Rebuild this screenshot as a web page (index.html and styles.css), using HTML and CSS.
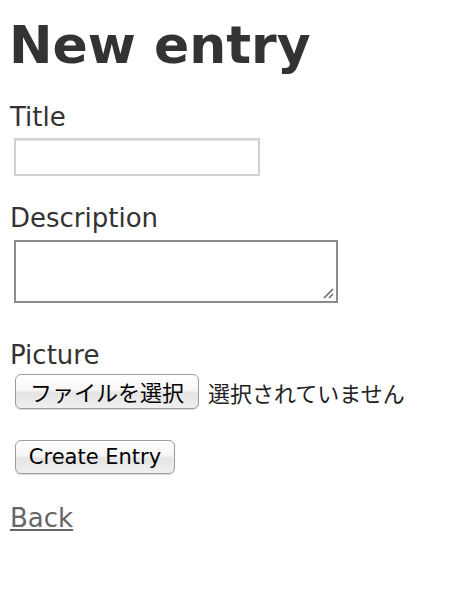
FILE: index.html
```html
<!DOCTYPE html>
<html lang="ja">
<head>
<meta charset="utf-8">
<title>New entry</title>
<link rel="stylesheet" href="styles.css">
</head>
<body>
<h1 class="page-title">New entry</h1>
<form class="entry-form">
  <div class="field field-title">
    <label class="field-label" for="entry_title">Title</label>
    <input class="text-input" id="entry_title" type="text">
  </div>
  <div class="field field-desc">
    <label class="field-label" for="entry_description">Description</label>
    <div class="area-wrap">
      <textarea class="text-area" id="entry_description"></textarea>
      <svg class="resizer" width="12" height="12" viewBox="0 0 12 12" aria-hidden="true">
        <line x1="2" y1="11" x2="11" y2="2" stroke="#6b6b6b" stroke-width="1.6"/>
        <line x1="7" y1="11" x2="11" y2="7" stroke="#6b6b6b" stroke-width="1.6"/>
      </svg>
    </div>
  </div>
  <div class="field field-picture">
    <label class="field-label">Picture</label>
    <div class="file-row">
      <button class="mac-button file-button" type="button">ファイルを選択</button>
      <span class="file-status">選択されていません</span>
    </div>
  </div>
  <div class="actions">
    <button class="mac-button submit-button" type="button">Create Entry</button>
  </div>
</form>
<a class="back-link" href="#">Back</a>
</body>
</html>
```

FILE: styles.css
```css
html, body {
  margin: 0;
  padding: 0;
  background: #fff;
}
body {
  padding: 0 0 0 10px;
  color: #333;
  font-family: "DejaVu Sans", Verdana, sans-serif;
  font-size: 26px;
  line-height: 30px;
}
.page-title {
  margin: 15px 0 0 -1px;
  font-size: 52px;
  line-height: 60px;
  font-weight: bold;
  color: #333;
}
.entry-form {
  display: flex;
  flex-direction: column;
  align-items: flex-start;
}
.field {
  display: flex;
  flex-direction: column;
  align-items: flex-start;
}
.field-label {
  display: block;
  font-size: 26px;
  line-height: 30px;
}
.field-title {
  margin-top: 27px;
}
.field-desc {
  margin-top: 27px;
}
.field-picture {
  margin-top: 37px;
}
.text-input {
  box-sizing: border-box;
  margin: 6px 0 0 4px;
  width: 246px;
  height: 38px;
  border: 2px solid #d2d2d2;
  box-shadow: inset 0 1px 1px #e6e6e6;
  background: #fff;
  padding: 0 4px;
  font-size: 20px;
  outline: none;
}
.area-wrap {
  position: relative;
  margin: 7px 0 0 4px;
  width: 324px;
  height: 63px;
}
.text-area {
  display: block;
  box-sizing: border-box;
  margin: 0;
  width: 324px;
  height: 63px;
  border: 2px solid #8a8a8a;
  background: #fff;
  padding: 2px;
  font-size: 20px;
  resize: none;
  outline: none;
}
.resizer {
  position: absolute;
  right: 4px;
  bottom: 4px;
}
.file-row {
  display: flex;
  align-items: center;
  margin-top: 4px;
}
.mac-button {
  box-sizing: border-box;
  margin: 0 0 0 5px;
  padding: 0;
  border: 1px solid #9c9c9c;
  border-radius: 6px;
  background: linear-gradient(#ffffff 0%, #f6f6f6 45%, #e4e4e4 55%, #f0f0f0 100%);
  box-shadow: 0 1px 1px rgba(0, 0, 0, 0.15);
  color: #000;
  cursor: default;
}
.file-button {
  width: 184px;
  height: 35px;
  font-family: "Noto Sans CJK JP", sans-serif;
  font-size: 22px;
  line-height: 33px;
}
.file-status {
  margin-left: 9px;
  font-family: "Noto Sans CJK JP", sans-serif;
  font-size: 22px;
  line-height: 30px;
  color: #222;
}
.actions {
  margin-top: 31px;
}
.submit-button {
  width: 160px;
  height: 34px;
  font-family: "DejaVu Sans", sans-serif;
  font-size: 21px;
  line-height: 32px;
}
.back-link {
  display: inline-block;
  margin-top: 29px;
  color: #666;
  text-decoration: underline;
  font-size: 26px;
  line-height: 30px;
}
```
